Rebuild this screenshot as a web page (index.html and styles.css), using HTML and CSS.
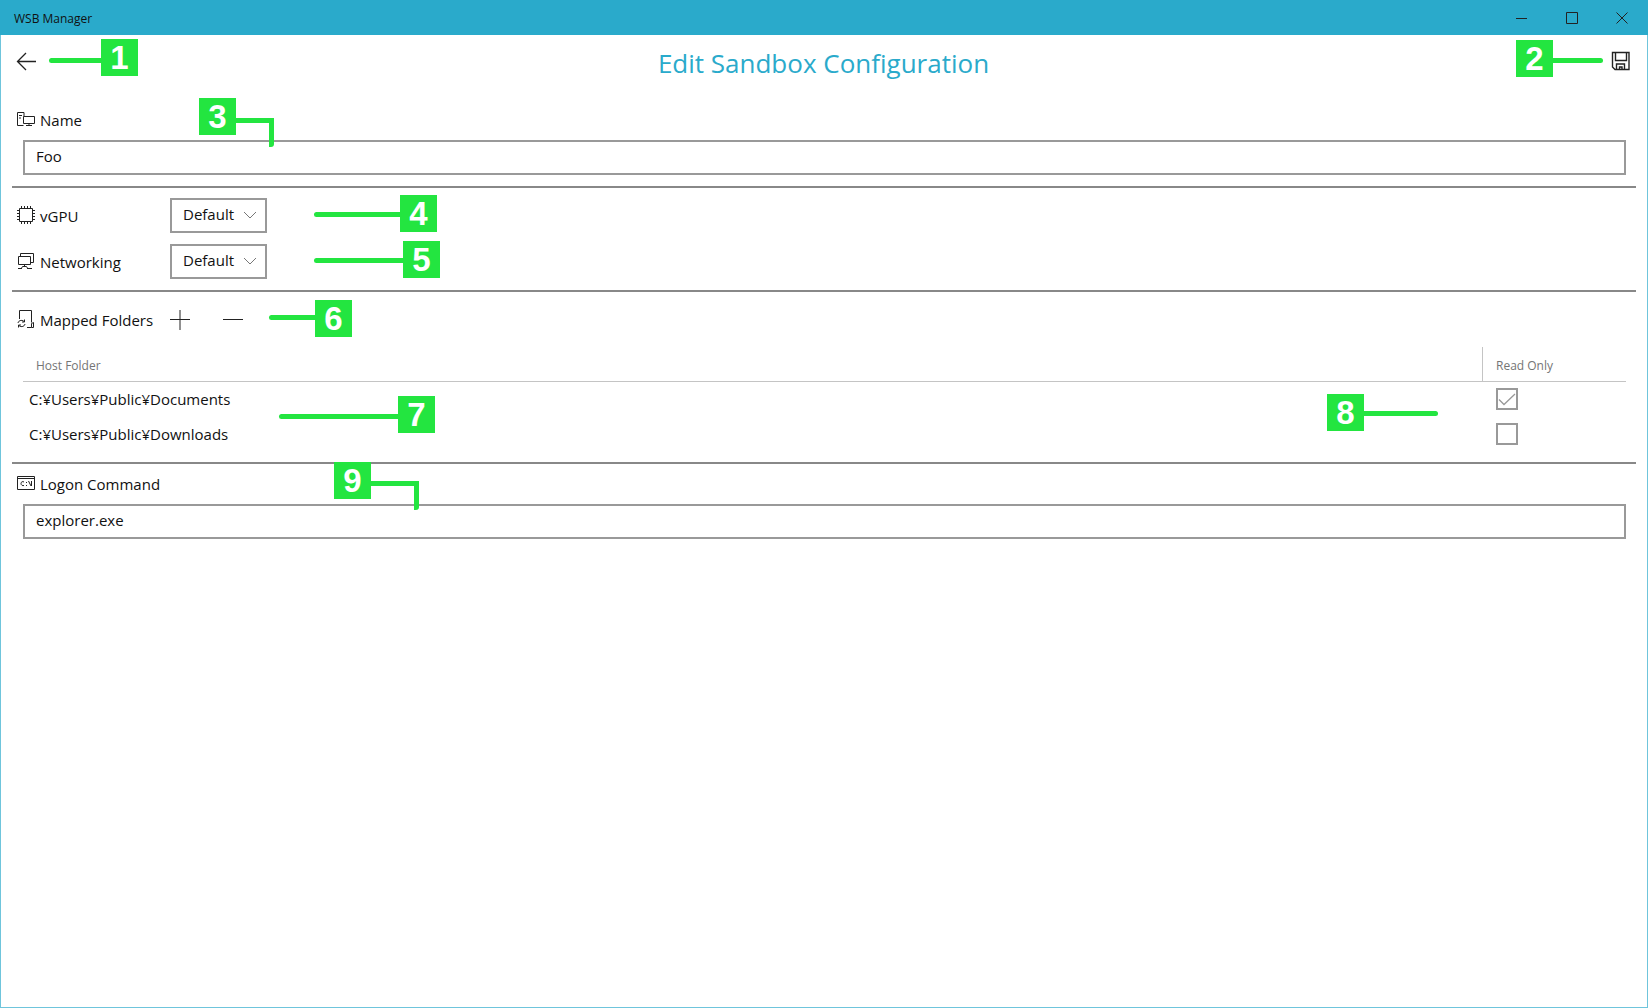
FILE: index.html
```html
<!DOCTYPE html>
<html lang="en">
<head>
<meta charset="utf-8">
<meta name="viewport" content="width=device-width, initial-scale=1">
<title>WSB Manager</title>
<link rel="stylesheet" href="styles.css">
</head>
<body>
<div class="window">
  <header class="titlebar">
    <span class="titlebar-name">WSB Manager</span>
    <div class="window-controls">
      <button class="window-button" type="button" aria-label="Minimize"><svg width="12" height="12" viewBox="0 0 12 12"><path d="M0 6.5h11"/></svg></button>
      <button class="window-button" type="button" aria-label="Maximize"><svg width="12" height="12" viewBox="0 0 12 12"><path d="M.5 .5h11v11H.5z"/></svg></button>
      <button class="window-button" type="button" aria-label="Close"><svg width="12" height="12" viewBox="0 0 12 12"><path d="M.5 .5l11 11M11.5 .5l-11 11"/></svg></button>
    </div>
  </header>

  <main class="page">
    <div class="page-header">
      <button class="icon-button" type="button" aria-label="Back"><svg width="20" height="20" viewBox="0 0 20 20"><path d="M20 10.500H1.500M10 2L1.500 10.500L10 19" stroke-width="1.300"/></svg></button>
      <h1 class="page-title">Edit Sandbox Configuration</h1>
      <button class="icon-button" type="button" aria-label="Save"><svg width="20" height="20" viewBox="0 0 20 20"><path d="M1.500 1.500h16.500v17H4l-2.500-2.500zM4.500 1.500v8h11v-8M5.500 18.500v-5.500h8v5.500M8.500 18.500v-2.500h2.500v2.500" stroke-width="1.400"/></svg></button>
    </div>

    <section class="section">
      <label class="field-label" for="name">
        <svg width="18" height="18" viewBox="0 0 18 18"><path d="M6.500 15.500H.5V2.500h6.500v4M2 5.500h3M2 8h2M6.500 6.500h11v7h-11zM12 13.500v2M9 15.500h6"/></svg>
        <span>Name</span>
      </label>
      <input class="text-box" id="name" type="text" value="Foo">
    </section>

    <section class="section options">
      <div class="option">
        <label class="field-label" for="vgpu">
          <svg width="18" height="18" viewBox="0 0 18 18"><path d="M2.500 2.500h13v13h-13z"/><path d="M4.500 0v2M7.500 0v2M10.500 0v2M13.500 0v2M4.500 16v2M7.500 16v2M10.500 16v2M13.500 16v2M0 4.500h2M0 7.500h2M0 10.500h2M0 13.500h2M16 4.500h2M16 7.500h2M16 10.500h2M16 13.500h2"/></svg>
          <span>vGPU</span>
        </label>
        <span class="select-wrap">
          <select class="select" id="vgpu"><option>Default</option></select>
          <svg class="chevron" width="14" height="8" viewBox="0 0 14 8"><path d="M1 1l6 6l6-6"/></svg>
        </span>
      </div>
      <div class="option">
        <label class="field-label" for="networking">
          <svg width="18" height="18" viewBox="0 0 18 18"><path d="M1.500 4.500h12v8h-12zM3.500 4.500v-3h13v9h-3M7.500 12.500v2M4 17l1.500-2.500h4L11 17M1 16.500h4M10 16.500h5"/></svg>
          <span>Networking</span>
        </label>
        <span class="select-wrap">
          <select class="select" id="networking"><option>Default</option></select>
          <svg class="chevron" width="14" height="8" viewBox="0 0 14 8"><path d="M1 1l6 6l6-6"/></svg>
        </span>
      </div>
    </section>

    <section class="section folders">
      <div class="toolbar">
        <h2 class="field-label" id="folders-title">
          <svg width="18" height="20" viewBox="0 0 18 20"><path d="M2.500 10V1.500h12v12M10 18.500h4.500v-4l2-1v5h-2M1 14c.5-3 5-3.500 6.500-1M7.500 10.500V13H5M8 15c-.5 3-5 3.500-6.500 1M1.500 18.500V16H4"/></svg>
          <span>Mapped Folders</span>
        </h2>
        <button class="icon-button" type="button" aria-label="Add folder"><svg width="20" height="20" viewBox="0 0 20 20"><path d="M0 9.500h20M10 0v20"/></svg></button>
        <button class="icon-button" type="button" aria-label="Remove folder"><svg width="20" height="20" viewBox="0 0 20 20"><path d="M0 9.500h20"/></svg></button>
      </div>
      <table class="folder-table" aria-labelledby="folders-title">
        <thead>
          <tr><th scope="col">Host Folder</th><th class="read-only" scope="col">Read Only</th></tr>
        </thead>
        <tbody>
          <tr><td>C:¥Users¥Public¥Documents</td><td class="read-only"><input class="check" type="checkbox" aria-label="Documents read only" checked></td></tr>
          <tr><td>C:¥Users¥Public¥Downloads</td><td class="read-only"><input class="check" type="checkbox" aria-label="Downloads read only"></td></tr>
        </tbody>
      </table>
    </section>

    <section class="section command">
      <label class="field-label" for="command">
        <svg width="18" height="18" viewBox="0 0 18 18"><path d="M.5 2.500h17v13H.5zM.5 4.500h17M7 8c-1.500-1-3 0-3 1.500S5.500 12 7 11.500M9.500 8v1M9.500 11v1M11.500 7l2.500 5M14.500 7v5"/></svg>
        <span>Logon Command</span>
      </label>
      <input class="text-box" id="command" type="text" value="explorer.exe">
    </section>
  </main>

  <div class="callout callout-1"><i class="lead"></i><b class="number">1</b></div>
  <div class="callout callout-2"><b class="number">2</b><i class="lead"></i></div>
  <div class="callout callout-3"><b class="number">3</b><i class="elbow"></i></div>
  <div class="callout callout-4"><i class="lead"></i><b class="number">4</b></div>
  <div class="callout callout-5"><i class="lead"></i><b class="number">5</b></div>
  <div class="callout callout-6"><i class="lead"></i><b class="number">6</b></div>
  <div class="callout callout-7"><i class="lead"></i><b class="number">7</b></div>
  <div class="callout callout-8"><b class="number">8</b><i class="lead"></i></div>
  <div class="callout callout-9"><b class="number">9</b><i class="elbow"></i></div>
</div>
</body>
</html>
```
FILE: styles.css
```css
:root {
  --accent: #2aaacb;
  --callout: #23e540;
  --border: #999;
}

* {
  box-sizing: border-box;
}

body {
  margin: 0;
  background: #fff;
  color: #111;
  font: 15px/20px "Open Sans", "Noto Sans", sans-serif;
}

svg {
  display: block;
  flex: none;
  fill: none;
  stroke: #222;
}

button {
  display: flex;
  align-items: center;
  justify-content: center;
  padding: 0;
  border: 0;
  background: none;
}

/* Window frame */
.window {
  position: relative;
  min-height: 100vh;
  border: 1px solid #6fc5dc;
  border-top: 0;
}

.titlebar {
  display: flex;
  justify-content: space-between;
  height: 35px;
  margin: 0 -1px;
  padding: 0 1px 0 14px;
  background: var(--accent);
  font-size: 12px;
  line-height: 37px;
}

.window-controls {
  display: flex;
  padding-top: 1px;
}

.window-button {
  width: 50px;
}

/* Page */
.page {
  padding: 0 11px;
}

.page-header {
  display: flex;
  align-items: center;
  justify-content: space-between;
  height: 53px;
  padding: 0 5px 2px 4px;
}

.page-title {
  margin: 0;
  padding-top: 4px;
  color: var(--accent);
  font-size: 26px;
  font-weight: 400;
  line-height: 36px;
}

.icon-button {
  width: 20px;
  height: 20px;
}

.section {
  padding: 10px 10px 11px 11px;
  border-bottom: 2px solid #888;
}

.section:last-child {
  border-bottom: 0;
}

.page-header + .section {
  padding-top: 20px;
}

.section.command {
  padding-top: 8px;
}

.field-label {
  display: flex;
  align-items: center;
  gap: 5px;
  margin: 0 0 0 -6px;
  font-size: 15px;
  font-weight: 400;
  line-height: 24px;
  white-space: nowrap;
}

.field-label svg {
  margin-bottom: 2px;
}

.text-box,
.select {
  height: 35px;
  padding: 0 11px 3px;
  border: 2px solid var(--border);
  border-radius: 0;
  background: #fff;
  color: inherit;
  font: inherit;
}

.text-box {
  display: block;
  width: 100%;
  margin-top: 8px;
}

.options {
  display: grid;
  gap: 11px;
}

.option {
  display: flex;
  align-items: center;
}

.option .field-label {
  width: 153px;
}

.select-wrap {
  display: grid;
  align-items: center;
}

.select {
  grid-area: 1 / 1;
  width: 97px;
  appearance: none;
}

.chevron {
  grid-area: 1 / 1;
  justify-self: end;
  margin: 0 10px 2px 0;
  stroke: #777;
  pointer-events: none;
}

/* Mapped folders */
.folders {
  padding-bottom: 10px;
}

.toolbar {
  display: flex;
  align-items: center;
  gap: 33px;
  height: 36px;
}

.toolbar .field-label {
  width: 120px;
}

.folder-table {
  width: 100%;
  margin-top: 9px;
  border-collapse: separate;
  border-spacing: 0;
}

.folder-table th,
.folder-table td {
  height: 35px;
  padding: 0 6px 1px;
  text-align: left;
}

.folder-table th {
  padding: 3px 13px 0;
  border-bottom: 1px solid #c4c4c4;
  color: #757575;
  font-size: 12px;
  font-weight: 400;
}

.folder-table .read-only {
  width: 144px;
}

.folder-table th.read-only {
  border-left: 1px solid #c4c4c4;
}

.folder-table td.read-only {
  padding-left: 14px;
}

.check {
  display: block;
  width: 22px;
  height: 22px;
  margin: 0;
  border: 2px solid var(--border);
  background: #fff;
  appearance: none;
}

.check:checked {
  background: url("data:image/svg+xml,%3Csvg xmlns='http://www.w3.org/2000/svg' viewBox='0 0 18 18'%3E%3Cpath d='M1 9.500l5 5L17 4' fill='none' stroke='%23999' stroke-width='1.300'/%3E%3C/svg%3E");
}

/* Numbered callouts laid over the window */
.callout {
  position: absolute;
  display: flex;
  pointer-events: none;
}

.number {
  width: 37px;
  height: 37px;
  background: var(--callout);
  color: #fff;
  font: bold 33px/38px "Liberation Sans", Arial, sans-serif;
  text-align: center;
}

.lead {
  width: 52px;
  height: 5px;
  margin-top: 17px;
  border-radius: 3px 0 0 3px;
  background: var(--callout);
}

.number + .lead {
  border-radius: 0 3px 3px 0;
}

.elbow {
  width: 38px;
  height: 29px;
  margin-top: 20px;
  border: solid var(--callout);
  border-width: 5px 5px 0 0;
  border-radius: 0 0 3px 3px;
}

.callout-1 { left: 48px; top: 39px; }
.callout-2 { right: 44px; top: 40px; }
.callout-3 { left: 198px; top: 98px; }
.callout-4 { left: 313px; top: 195px; }
.callout-5 { left: 313px; top: 241px; }
.callout-6 { left: 268px; top: 300px; }
.callout-7 { left: 278px; top: 396px; }
.callout-8 { right: 209px; top: 394px; }
.callout-9 { left: 333px; top: 462px; }

.callout-1 .lead { margin-top: 19px; }
.callout-2 .lead { width: 50px; margin-top: 18px; }
.callout-4 .lead { width: 86px; }
.callout-5 .lead { width: 89px; }
.callout-6 .lead { width: 46px; margin-top: 15px; }
.callout-7 .lead { width: 119px; margin-top: 18px; }
.callout-8 .lead { width: 74px; }
.callout-9 .elbow { width: 48px; margin-top: 19px; }
```
